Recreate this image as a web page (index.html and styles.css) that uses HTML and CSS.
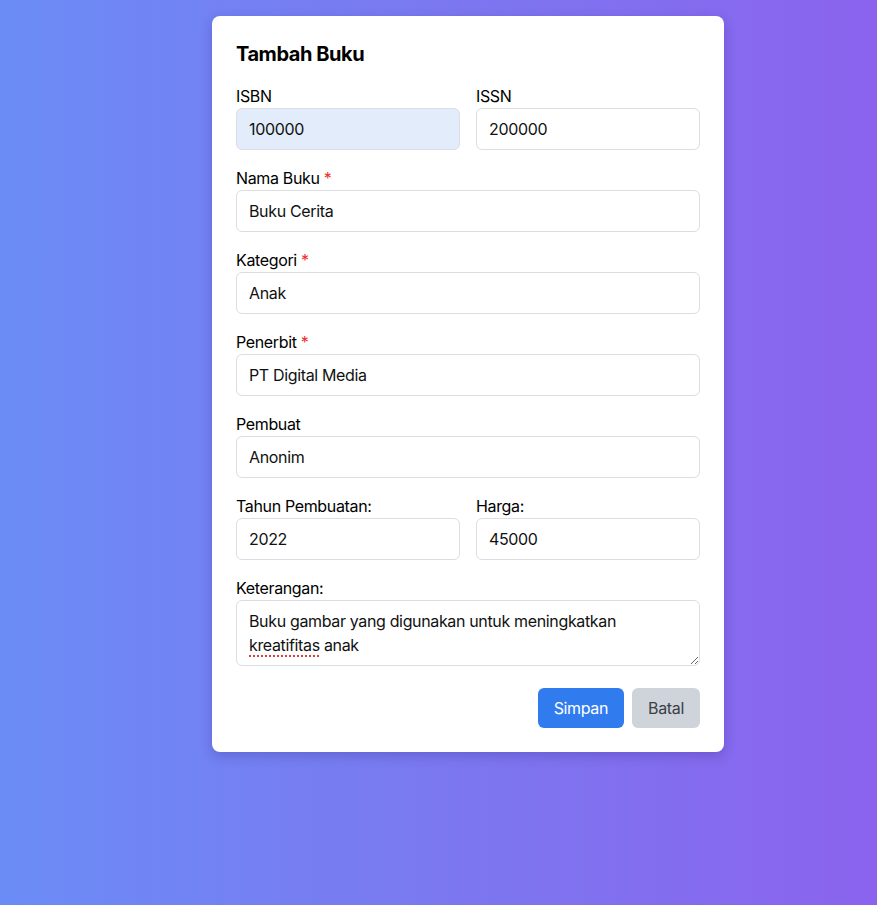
FILE: index.html
```html
<!DOCTYPE html>
<html lang="id">
<head>
<meta charset="utf-8">
<title>Tambah Buku</title>
<link rel="stylesheet" href="styles.css">
</head>
<body>
<div class="card">
  <h1 class="title">Tambah Buku</h1>
  <div class="row">
    <div class="field">
      <label class="label">ISBN</label>
      <input class="input input-filled" type="text" value="100000">
    </div>
    <div class="field">
      <label class="label">ISSN</label>
      <input class="input" type="text" value="200000">
    </div>
  </div>
  <div class="field">
    <label class="label">Nama Buku <span class="req">*</span></label>
    <input class="input" type="text" value="Buku Cerita">
  </div>
  <div class="field">
    <label class="label">Kategori <span class="req">*</span></label>
    <input class="input" type="text" value="Anak">
  </div>
  <div class="field">
    <label class="label">Penerbit <span class="req">*</span></label>
    <input class="input" type="text" value="PT Digital Media">
  </div>
  <div class="field">
    <label class="label">Pembuat</label>
    <input class="input" type="text" value="Anonim">
  </div>
  <div class="row">
    <div class="field">
      <label class="label">Tahun Pembuatan:</label>
      <input class="input" type="text" value="2022">
    </div>
    <div class="field">
      <label class="label">Harga:</label>
      <input class="input" type="text" value="45000">
    </div>
  </div>
  <div class="field field-last">
    <label class="label">Keterangan:</label>
    <div class="textarea" contenteditable="true" role="textbox" aria-multiline="true">Buku gambar yang digunakan untuk meningkatkan <span class="misspelled">kreatifitas</span> anak</div>
  </div>
  <div class="actions">
    <button class="btn btn-primary" type="button">Simpan</button>
    <button class="btn btn-secondary" type="button">Batal</button>
  </div>
</div>
</body>
</html>
```

FILE: styles.css
```css
* {
  box-sizing: border-box;
}

html, body {
  margin: 0;
  padding: 0;
}

body {
  min-height: 905px;
  background: linear-gradient(to right, #6b8cf5 0%, #7b78f0 50%, #8b63ee 100%);
  font-family: Inter, "Noto Sans", "Liberation Sans", sans-serif;
  color: #111;
  font-size: 16px;
  line-height: 24px;
  letter-spacing: -0.35px;
  padding-top: 16px;
}

.card {
  width: 512px;
  margin-left: 212px;
  background: #fff;
  border-radius: 8px;
  padding: 24px;
  box-shadow: 0 4px 12px rgba(40, 30, 120, 0.25);
}

.title {
  margin: 0 0 16px;
  font-size: 20px;
  line-height: 28px;
  font-weight: 700;
  letter-spacing: -0.45px;
  color: #000;
}

.row {
  display: grid;
  grid-template-columns: 1fr 1fr;
  gap: 16px;
}

.field {
  display: flex;
  flex-direction: column;
  margin-bottom: 16px;
}

.field-last {
  margin-bottom: 22px;
}

.label {
  font-size: 16px;
  line-height: 24px;
  color: #000;
}

.req {
  color: #ef2b2b;
}

.input {
  height: 42px;
  width: 100%;
  border: 1px solid #dcdde2;
  border-radius: 6px;
  padding: 8px 12px;
  font-family: inherit;
  font-size: 16px;
  line-height: 24px;
  letter-spacing: inherit;
  color: #111;
  background: #fff;
  outline: none;
}

.input-filled {
  background: #e3ecfb;
}

.textarea {
  height: 66px;
  border: 1px solid #dcdde2;
  border-radius: 6px;
  padding: 8px 12px;
  font-size: 16px;
  line-height: 24px;
  color: #111;
  overflow: auto;
  resize: vertical;
  outline: none;
}

.misspelled {
  text-decoration: underline dotted #e23b3b;
  text-decoration-thickness: 2px;
  text-underline-offset: 4px;
}

.actions {
  display: flex;
  justify-content: flex-end;
  gap: 8px;
}

.btn {
  height: 40px;
  padding: 0 16px;
  border: none;
  border-radius: 6px;
  font-family: inherit;
  font-size: 16px;
  line-height: 24px;
  letter-spacing: inherit;
  cursor: pointer;
}

.btn-primary {
  background: #307cee;
  color: #fff;
}

.btn-secondary {
  background: #cfd3da;
  color: #3a3f48;
}
```
